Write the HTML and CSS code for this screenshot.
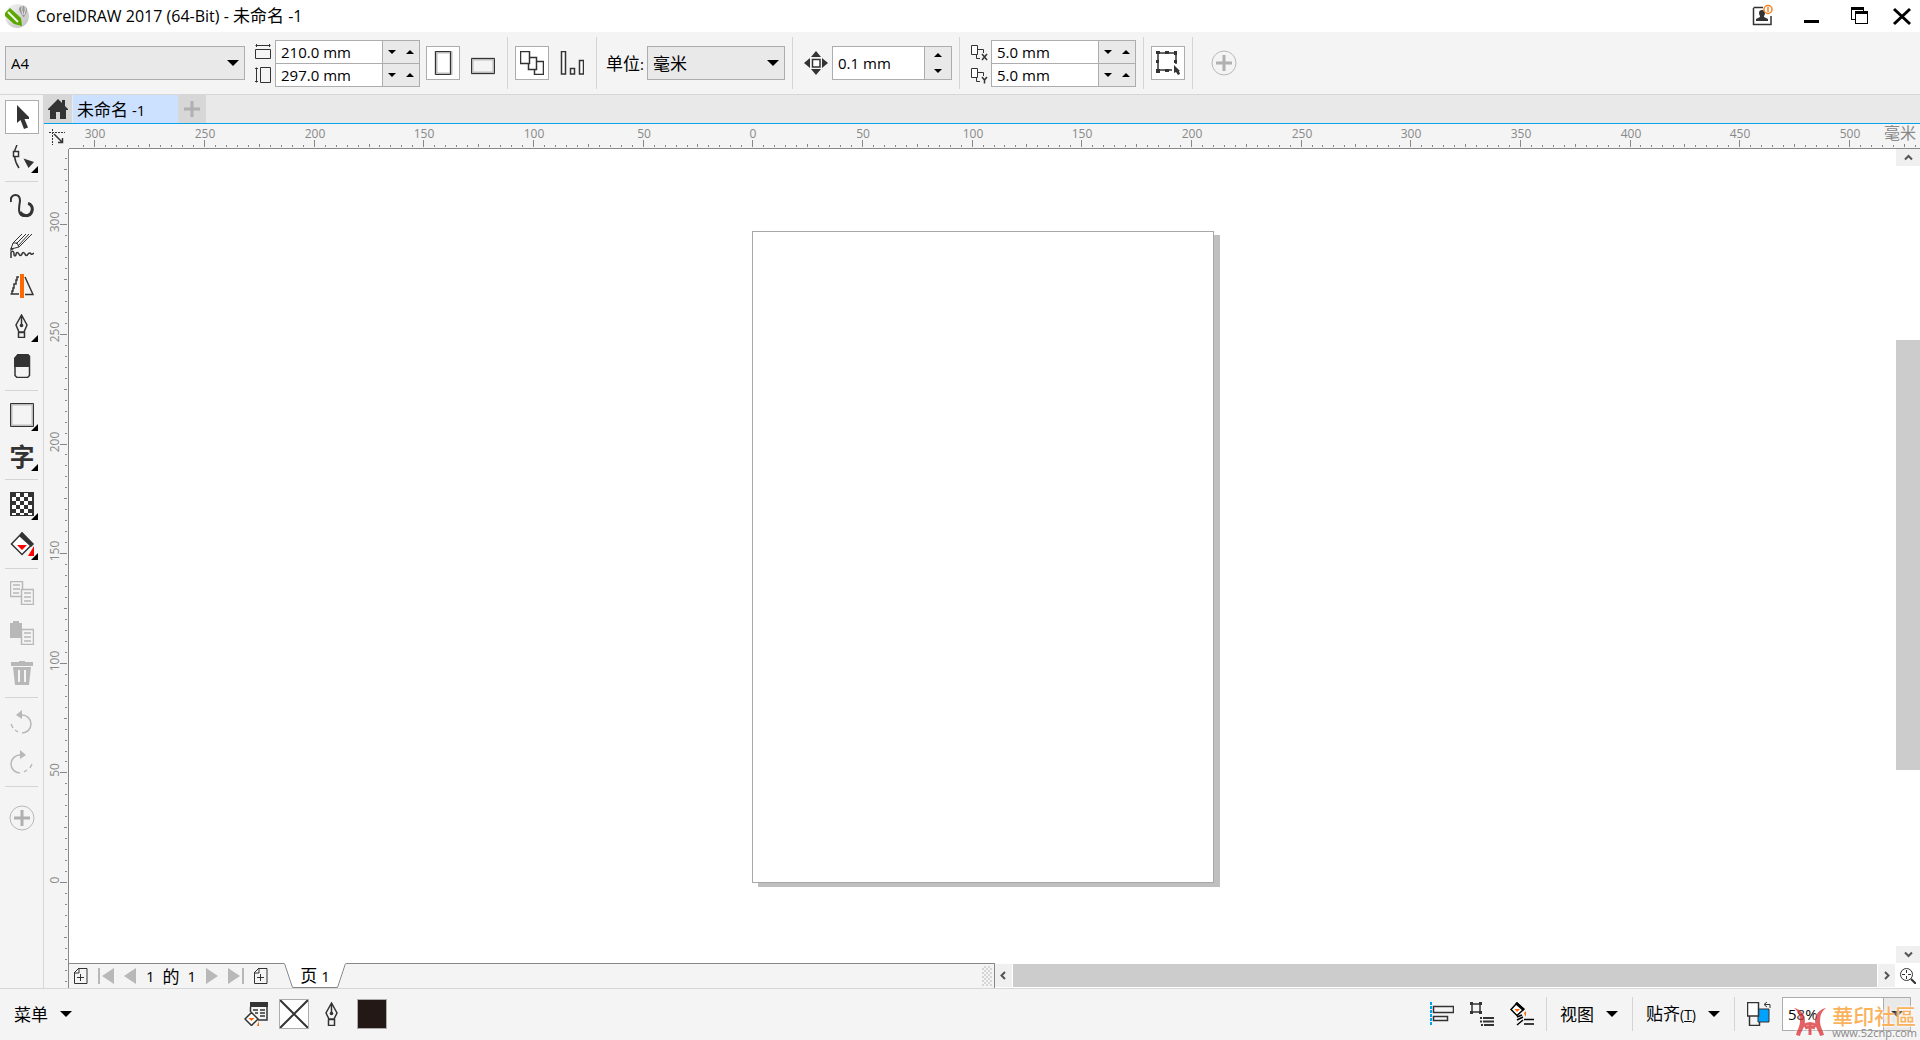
FILE: index.html
```html
<!DOCTYPE html>
<html lang="zh-CN">

<head>
    <meta charset="UTF-8">
    <meta name="viewport" content="width=device-width, initial-scale=1.0">
    <title>CorelDRAW 2017 (64-Bit) - 未命名 -1</title>
    <link rel="stylesheet" href="styles.css">
</head>

<body>
    <header class="title-bar">
        <svg class="logo" viewBox="0 0 24 24">
            <defs>
                <linearGradient id="ball" x1="0" y1="0" x2="1" y2="1">
                    <stop offset="0" stop-color="#f8f8f8" />
                    <stop offset="1" stop-color="#bdbdbd" />
                </linearGradient>
            </defs>
            <circle cx="12" cy="12" r="12" fill="url(#ball)" />
            <path d="M0 9L5 4L16 14L17 22L9 20L0 12z" fill="#5aa700" />
            <path d="M3 8L13 18" stroke="#f3f8ea" stroke-width="2" />
            <path d="M14 5C14 1 22 0 22 6C22 9 20 11 19 13H18C17 10 14 8 14 5z" fill="#999" />
            <path d="M17 2Q16 6 18 11M20 2Q21 6 19 11" stroke="#e8e8e8" fill="none" />
        </svg>
        <h1>CorelDRAW 2017 (64-Bit) - <span class="zh">未命名</span> -1</h1>
        <button class="win-btn" aria-label="账户"><svg viewBox="0 0 24 24">
                <path d="M3.500 4v16.500h17.500V12M3.500 3.500H13" fill="none" stroke="#333" stroke-width="1.500" />
                <path d="M9 9a3 3 0 0 1 6 0c0 2-1 2-1 4l4 2v2H6v-2l4-2c0-2-1-2-1-4z" fill="#333" />
                <circle cx="18" cy="5.500" r="4" fill="#fff" stroke="#f58220" stroke-width="1.500" />
                <path d="M18 3v5" stroke="#f58220" stroke-width="1.500" />
            </svg></button>
        <button class="win-btn" aria-label="最小化"><svg viewBox="0 0 24 24">
                <path d="M5 16h15v3H5z" />
            </svg></button>
        <button class="win-btn" aria-label="还原"><svg viewBox="0 0 24 24" shape-rendering="crispEdges">
                <path d="M3 3h13v4h4v13H7v-4H3zM4 6v9h3V7h8V6zM8 10v9h11v-9z" fill-rule="evenodd" />
            </svg></button>
        <button class="win-btn close" aria-label="关闭"><svg viewBox="0 0 24 24">
                <path d="M4 5L20 20M20 5L4 20" stroke="#000" stroke-width="3" />
            </svg></button>
    </header>

    <div class="property-bar">
        <div class="select page-size">
            <select aria-label="页面大小">
                <option>A4</option>
            </select>
        </div>
        <div class="pair">
            <div class="field">
                <label for="page-w" title="宽度"><svg viewBox="0 0 16 20">
                        <path d="M.5 3.500h15M1.500 2v3M14.500 2v3M.5 7.500h15v9h-15z" class="line" />
                    </svg></label>
                <div class="spin"><input type="text" id="page-w" value="210.0 mm"><button
                        class="down" aria-label="减"></button><button class="up" aria-label="加"></button></div>
            </div>
            <div class="field">
                <label for="page-h" title="高度"><svg viewBox="0 0 16 20">
                        <path d="M1.500 2.500v15M0 3.500h3M0 16.500h3M5.500 2.500h10v15h-10z" class="line" />
                    </svg></label>
                <div class="spin"><input type="text" id="page-h" value="297.0 mm"><button
                        class="down" aria-label="减"></button><button class="up" aria-label="加"></button></div>
            </div>
        </div>
        <button class="tool active" aria-label="纵向"><svg viewBox="0 0 24 24">
                <path d="M5 1h15v22H5z" fill="#fff" stroke="#bbb" stroke-width="3" />
                <path d="M4.500 .5h15v23h-15z" class="line" />
            </svg></button>
        <button class="tool" aria-label="横向"><svg viewBox="0 0 24 24">
                <path d="M1 8h22v14H1z" fill="#f4f4f4" stroke="#bbb" stroke-width="3" />
                <path d="M.5 7.500h23v15H.5z" class="line" />
            </svg></button>
        <span class="sep"></span>
        <button class="tool active" aria-label="所有页面"><svg viewBox="0 0 24 24">
                <path d="M14.500 10.500h9v13h-9z" class="box bold" />
                <path d="M8.500 6.500h8v12h-8z" class="box bold" />
                <path d="M.5 .5h9v12h-9z" class="box bold" />
            </svg></button>
        <button class="tool" aria-label="当前页面"><svg viewBox="0 0 24 24">
                <path d="M1.500 .5h4v22.500h-4zM10.500 17.500h4v5.500h-4zM19.500 9.500h4V23h-4z" class="box bold" />
            </svg></button>
        <span class="sep"></span>
        <div class="units">
            <label for="unit"><span class="zh">单位</span>:</label>
            <div class="select">
                <select id="unit" class="zh">
                    <option>毫米</option>
                </select>
            </div>
        </div>
        <span class="sep"></span>
        <div class="field nudge">
            <label for="nudge" title="微调距离"><svg viewBox="0 0 24 24">
                    <path d="M12 0l5 6H7zM12 24l5-6H7zM0 12l6-5v10zM24 12l-6-5v10z" fill="#333" />
                    <path d="M8.500 8.500h7.500V16H8.500z" class="box bold" />
                </svg></label>
            <div class="spin tall"><input type="text" id="nudge" value="0.1 mm">
                <div class="stack"><button class="up" aria-label="加"></button><button class="down"
                        aria-label="减"></button></div>
            </div>
        </div>
        <span class="sep"></span>
        <div class="pair">
            <div class="field">
                <label for="dup-x" title="再制 X"><svg viewBox="0 0 18 20">
                        <path d="M.5 3.500h6v9h-6z" class="box" />
                        <path d="M7 7.500h5.500V11M5.500 13v3.500H9" class="line" />
                        <path d="M11 12l5 6M16 12l-5 6" class="line bold" />
                    </svg></label>
                <div class="spin"><input type="text" id="dup-x" value="5.0 mm"><button
                        class="down" aria-label="减"></button><button class="up" aria-label="加"></button></div>
            </div>
            <div class="field">
                <label for="dup-y" title="再制 Y"><svg viewBox="0 0 18 20">
                        <path d="M.5 3.500h6v9h-6z" class="box" />
                        <path d="M7 7.500h5.500V11M5.500 13v3.500H9" class="line" />
                        <path d="M11 12l2.500 3 2.500-3M13.500 15v3.500" class="line bold" />
                    </svg></label>
                <div class="spin"><input type="text" id="dup-y" value="5.0 mm"><button
                        class="down" aria-label="减"></button><button class="up" aria-label="加"></button></div>
            </div>
        </div>
        <span class="sep"></span>
        <button class="tool active" aria-label="视为已填充"><svg viewBox="0 0 24 24">
                <path d="M16 19H2V2h18v11" class="line bold" />
                <path d="M0 0h4v3H0zM9 0h4v3H9zM18 0h3v4h-3zM0 9h3v3H0zM0 18h4v4H0zM9 18h4v3H9zM18 9h3v3h-3z" fill="#333" />
                <path d="M18 14v8l2-1 2 3 2-1-1-3h1z" fill="#333" />
            </svg></button>
        <span class="sep"></span>
        <button class="add" aria-label="自定义"><svg viewBox="0 0 26 26">
                <circle cx="13" cy="13" r="12" fill="none" stroke="#b8b8b8" />
                <path d="M13 5v16M5 13h16" stroke="#b0b0b0" stroke-width="3" />
            </svg></button>
    </div>

    <main class="workspace">
        <nav class="toolbox">
            <button class="tool active" aria-label="选择"><svg viewBox="0 0 24 24">
                    <path d="M7 0v18l3.500-3 3.500 9 4-1.500-3.500-8.500h4.500v-2z" fill="#333" />
                </svg></button>
            <button class="tool flyout" aria-label="形状"><svg viewBox="0 0 24 24">
                    <path d="M7 0C3 7 4 16 9 23" class="line bold" />
                    <path d="M3.500 6.500h5v5h-5z" class="box bold" />
                    <path d="M13.500 13.500L24 17l-5.500 6z" fill="#333" />
                </svg></button>
            <hr>
            <button class="tool" aria-label="手绘"><svg viewBox="0 0 24 24">
                    <path d="M1 8C0 3 3 1 5.500 1C9 1 10 3 10 7C9 13 7 22 15 22C20 22 23 18 22 14" class="line" stroke-width="2" />
                    <path d="M10 18C12 22 20 24 22 17C23 13 21 10 18 9.500" class="line fat" />
                </svg></button>
            <button class="tool" aria-label="艺术笔"><svg viewBox="0 0 24 24">
                    <path d="M3 9L12 0M9 13L22 0M3 9L1 15L9 13L7 9zM6 10L16 0M8 12L19 0" class="line" />
                    <path d="M0 17L1 13L4 15z" fill="#333" />
                    <path d="M1 24V18q3-2 3 2v1q1 2 2 0v-1q1-3 3 0q1 3 3 0q1-3 3 0q1 3 3 0q2-2 3 0q1 1 3-1" class="line bold" />
                </svg></button>
            <button class="tool" aria-label="对称"><svg viewBox="0 0 24 24">
                    <path d="M9 3H7v3H6v4H4v4H3v3H2v3H0.500H9M15 3l8 17.500h-8" class="line bold" />
                    <path d="M10 0h4v24h-4z" fill="#ff6a00" />
                </svg></button>
            <button class="tool flyout" aria-label="钢笔"><svg viewBox="0 0 24 24">
                    <path d="M11.500 1L6 11l3 7h5l3-7zM11.500 1v10M8.500 18.500h6v5h-6z" class="line bold" />
                    <circle cx="11.500" cy="11.500" r="1.800" fill="#333" />
                </svg></button>
            <button class="tool" aria-label="橡皮擦"><svg viewBox="0 0 24 24">
                    <path d="M8 .5h9.500l2 2v19l-2 2H7l-2-2v-17z" fill="#f4f4f4" stroke="#333" stroke-width="1.500" />
                    <path d="M8 0h10l2 2v11H4V4z" fill="#333" />
                </svg></button>
            <hr>
            <button class="tool flyout" aria-label="矩形"><svg viewBox="0 0 24 24">
                    <path d="M1.500 1.500h21v21h-21z" fill="none" stroke="#bbb" stroke-width="2" />
                    <path d="M.5 .5h23v23H.5z" class="line" />
                </svg></button>
            <button class="tool flyout glyph">字</button>
            <hr>
            <button class="tool flyout" aria-label="透明度"><svg viewBox="0 0 24 24" shape-rendering="crispEdges">
                    <path d="M0 0h24v24H0z" fill="#333" />
                    <path d="M6 1h4v4H6zM14 1h4v4h-4zM2 5h4v4H2zM10 5h4v4h-4zM18 5h4v4h-4zM6 9h4v4H6zM14 9h4v4h-4zM2 13h4v4H2zM10 13h4v4h-4zM18 13h4v4h-4zM6 17h4v4H6zM14 17h4v4h-4zM2 21h4v2H2zM10 21h4v2h-4zM18 21h4v2h-4z" fill="#fff" />
                </svg></button>
            <button class="tool flyout" aria-label="填充"><svg viewBox="0 0 24 24">
                    <path d="M12 1L1.500 12L12 22.500L22.500 12z" fill="#fff" stroke="#333" stroke-width="1.500" />
                    <path d="M12 0l12 12-3 3L9 4z" fill="#333" />
                    <path d="M7 13h10l-5 5zM24 14v10h-6z" fill="#f00" />
                </svg></button>
            <hr>
            <button class="tool muted" aria-label="复制"><svg viewBox="0 0 24 24">
                    <path d="M.5 .5h12v15H.5zM3 4h7M3 8h7M3 12h6" class="line bold" />
                    <path d="M11.500 8.500h12v15h-12zM14 12h7M14 16h7M14 20h7" class="box bold" />
                </svg></button>
            <button class="tool muted" aria-label="粘贴"><svg viewBox="0 0 24 24">
                    <path d="M0 2h3V0h6v2h3v15H0z" fill="#b8b8b8" />
                    <path d="M11.500 8.500h12v15h-12zM14 12h7M14 16h7M14 20h7" class="box bold" />
                </svg></button>
            <button class="tool muted" aria-label="删除"><svg viewBox="0 0 24 24">
                    <path d="M9 0h6v1h8v4H1V1h8zM3 6h18l-2 18H5zM8 9v12h2V9zM14 9v12h2V9z" fill="#b8b8b8" fill-rule="evenodd" />
                </svg></button>
            <hr>
            <button class="tool muted" aria-label="撤销"><svg viewBox="0 0 24 24">
                    <path d="M12 5a9 9 0 1 1 0 18M8 22l-3-2M3 18l-2-4" class="line bold" />
                    <path d="M12 0v9L6 5z" fill="#b8b8b8" />
                </svg></button>
            <button class="tool muted" aria-label="重做"><svg viewBox="0 0 24 24">
                    <path d="M10 5a9 9 0 1 0 0 18M14 22l3-2M20 18l2-4" class="line bold" />
                    <path d="M10 0v9l6-4z" fill="#b8b8b8" />
                </svg></button>
            <hr>
            <button class="add" aria-label="自定义"><svg viewBox="0 0 26 26">
                    <circle cx="13" cy="13" r="12" fill="none" stroke="#b8b8b8" />
                    <path d="M13 5v16M5 13h16" stroke="#b0b0b0" stroke-width="3" />
                </svg></button>
        </nav>

        <section class="document">
            <div class="tabs">
                <button class="home" aria-label="欢迎屏幕"><svg viewBox="0 0 20 20">
                        <path d="M10 0L0 10v1h2v9h6v-7h4v7h6v-9h2v-1l-3-3V1h-3v3z" fill="#333" />
                    </svg></button>
                <button class="tab"><span class="zh">未命名</span> -1</button>
                <button class="new-tab" aria-label="新建"><svg viewBox="0 0 18 18">
                        <path d="M9 1v16M1 9h16" stroke="#b0b0b0" stroke-width="3" />
                    </svg></button>
            </div>

            <div class="stage">
                <div class="corner"><svg viewBox="0 0 25 25">
                        <path d="M5 8.500h16M8.500 5v16" class="line" stroke-dasharray="2 1" />
                        <path d="M10 10l8 8M18.500 14v4.500H14" class="line bold" />
                    </svg></div>
                <div class="ruler-x"><svg id="ruler-x"></svg><span class="unit">毫米</span></div>
                <div class="ruler-y"><svg id="ruler-y"></svg></div>
                <div class="canvas">
                    <div class="page" id="page"></div>
                </div>
                <div class="scroll-y">
                    <button aria-label="向上"><svg viewBox="0 0 9 9">
                            <path d="M1 6.500L4.500 3L8 6.500" />
                        </svg></button>
                    <div class="track">
                        <div class="thumb"></div>
                    </div>
                    <button aria-label="向下"><svg viewBox="0 0 9 9">
                            <path d="M1 2.500L4.500 6L8 2.500" />
                        </svg></button>
                </div>
                <div class="bottom">
                    <div class="pager">
                        <button aria-label="添加页"><svg width="14" viewBox="0 0 14 16">
                                <path d="M4.500 .5h8.500v15H.5V4.500z" class="line" />
                                <path d="M0 5l5-5v5zM6.500 6v7M3 9.500h7" class="line" />
                            </svg></button>
                        <button aria-label="第一页"><svg width="16" viewBox="0 0 16 16">
                                <path d="M0 0h2v16H0zM16 0v16L4 8z" fill="#b8b8b8" />
                            </svg></button>
                        <button aria-label="上一页"><svg width="12" viewBox="0 0 12 16">
                                <path d="M12 0v16L0 8z" fill="#b8b8b8" />
                            </svg></button>
                        <p>1<span class="zh">的</span>1</p>
                        <button aria-label="下一页"><svg width="12" viewBox="0 0 12 16">
                                <path d="M0 0v16l12-8z" fill="#b8b8b8" />
                            </svg></button>
                        <button aria-label="最后一页"><svg width="16" viewBox="0 0 16 16">
                                <path d="M14 0h2v16h-2zM0 0v16l12-8z" fill="#b8b8b8" />
                            </svg></button>
                        <button aria-label="添加页"><svg width="14" viewBox="0 0 14 16">
                                <path d="M4.500 .5h8.500v15H.5V4.500z" class="line" />
                                <path d="M0 5l5-5v5zM6.500 6v7M3 9.500h7" class="line" />
                            </svg></button>
                        <button class="page-tab"><svg viewBox="0 0 62 25">
                                <path d="M0 0h62v1l-8 23.500H8.500L0 1z" fill="#fff" />
                                <path d="M.5 .5L8.500 24.500H53.500L61.500 .5" fill="none" stroke="#888" />
                            </svg><span class="page-name"><span class="zh">页</span> 1</span></button>
                        <span class="grip"></span>
                    </div>
                    <div class="scroll-x">
                        <button aria-label="向左"><svg viewBox="0 0 9 9">
                                <path d="M6 1L2.500 4.500L6 8" />
                            </svg></button>
                        <div class="thumb"></div>
                        <button aria-label="向右"><svg viewBox="0 0 9 9">
                                <path d="M3 1L6.500 4.500L3 8" />
                            </svg></button>
                    </div>
                    <button class="zoom" aria-label="导航器"><svg viewBox="0 0 16 16">
                            <circle cx="6.500" cy="6.500" r="6" class="line" />
                            <path d="M11 11l5 5" class="line" stroke-width="2" />
                            <path d="M6.500 2v3M6.500 8v3M2 6.500h3M8 6.500h3" class="line" />
                        </svg></button>
                </div>
            </div>
        </section>
    </main>

    <footer class="status-bar">
        <button class="menu main-menu"><span class="zh">菜单</span></button>
        <button class="tool" aria-label="文档调色板"><svg viewBox="0 0 24 24">
                <path d="M6 0h18v5H6z" fill="#333" />
                <path d="M6.500 5v5M23 5v13H14M9 8h5M16 8h5M11 11h3M16 11h5M16 14h5" class="line bold" />
                <path d="M7.500 10.500L1 17l6.500 6.500L14 17z" class="box bold" />
                <path d="M4.500 16h6l-3 3zM15 19v5h-2z" fill="#f60" />
            </svg></button>
        <button class="swatch" aria-label="无填充"><svg viewBox="0 0 28 28">
                <path d="M0 0l28 28M28 0L0 28" class="line" />
            </svg></button>
        <button class="tool pen" aria-label="轮廓笔"><svg viewBox="0 0 24 24">
                <path d="M11.500 1L6 11l3 6h5l3-6zM11.500 1v10M8.500 17.500h6v6h-6z" class="line bold" />
                <circle cx="11.500" cy="11.500" r="1.800" fill="#333" />
            </svg></button>
        <button class="swatch black" aria-label="轮廓色"></button>

        <div class="status-right">
            <button class="tool" aria-label="对齐"><svg viewBox="0 0 24 24">
                    <path d="M1 0v24" stroke="#00a2e8" stroke-width="2" stroke-dasharray="3 1" />
                    <path d="M3.500 4.500h20v6h-20zM3.500 14.500h14v4h-14z" class="line bold" />
                </svg></button>
            <button class="tool" aria-label="对象属性"><svg viewBox="0 0 24 24">
                    <path d="M2 2h8v8H2z" class="line bold" />
                    <path d="M0 0h3v3H0zM9 0h3v3H9zM0 9h3v3H0zM9 9h3v3H9z" fill="#333" />
                    <path d="M10 16h2M13 16h11M10 19.500h2M13 19.500h11M11 23h2M14 23h10" class="line" stroke-width="2" />
                </svg></button>
            <button class="tool" aria-label="填充属性"><svg viewBox="0 0 24 24">
                    <path d="M7 1L1 7.500L7 13.500L13.500 7.500z" fill="#fff" stroke="#000" stroke-width="1.500" />
                    <path d="M7 0l8 7-2 2-8-7z" />
                    <path d="M4.500 7h5.500L7 10zM16 9v6l-2-4z" fill="#f60" />
                    <path d="M7 15l5-2M7 18l6-3M7 23l6-5M14 17.500h10M14 22h10" stroke="#000" stroke-width="1.500" />
                </svg></button>
            <span class="sep"></span>
            <button class="menu"><span class="zh">视图</span></button>
            <span class="sep"></span>
            <button class="menu"><span><span class="zh">贴齐</span><small>(<u>T</u>)</small></span></button>
            <span class="sep"></span>
            <button class="tool" aria-label="页面顺序"><svg viewBox="0 0 24 24">
                    <path d="M2.500 13v10.500h10V20" class="line bold" />
                    <path d="M11 7h11v13H11z" fill="#00a2ff" stroke="#333" />
                    <path d="M.5 .5h11V14H.5z" class="box bold" />
                    <path d="M18 2.500h5V6M20 0l-3 2.500 3 2.500" class="line" />
                </svg></button>
            <div class="select zoom-level">
                <select aria-label="缩放级别">
                    <option>58%</option>
                </select>
            </div>
        </div>

        <div class="watermark">
            <svg viewBox="0 0 32 29">
                <path d="M0 0C6 1 11 6 11 13C11 20 7 23 6 28L2 27C3 22 6 19 6 13C6 7 4 3 0 0zM32 0C26 1 21 6 21 13C21 20 25 23 26 28L30 27C29 22 26 19 26 13C26 7 28 3 32 0z" fill="#dc3b3f" />
                <path d="M9 18Q16 13 23 18M16 16v11M11 20q5-2 10 0" fill="none" stroke="#dc3b3f" stroke-width="3" />
            </svg>
            <div>
                <b>華印社區</b>
                <i>www.52cnp.com</i>
            </div>
        </div>
    </footer>
    <script src="script.js"></script>
</body>

</html>
```
FILE: styles.css
```css
* {
    margin: 0;
    padding: 0;
    box-sizing: border-box;
}

body {
    height: 100vh;
    display: flex;
    flex-direction: column;
    overflow: hidden;
    background-color: #f4f4f4;
    color: #000;
    font-family: "Open Sans", "Noto Sans CJK SC", sans-serif;
    font-size: 15px;
    line-height: 20px;
}

button,
input,
select {
    font: inherit;
    color: inherit;
    border: none;
    border-radius: 0;
    background: none;
    outline: none;
}

svg {
    display: block;
}

.zh {
    font-family: "Noto Sans CJK SC", sans-serif;
    font-size: 17px;
}

.line {
    fill: none;
    stroke: #333;
}

.box {
    fill: #fff;
    stroke: #333;
}

.bold {
    stroke-width: 1.5;
}

.fat {
    stroke-width: 3;
}

/* title bar */
.title-bar {
    height: 32px;
    display: flex;
    align-items: center;
    padding: 0 6px 0 5px;
    background-color: #fff;
}

.logo {
    width: 24px;
    height: 24px;
}

.title-bar h1 {
    flex: 1;
    padding: 0 0 2px 7px;
    font-size: 16px;
    font-weight: normal;
}

.win-btn {
    width: 24px;
    height: 24px;
    margin-left: 25px;
}

.win-btn.close {
    margin-left: 18px;
}

/* property bar */
.property-bar {
    height: 63px;
    display: flex;
    align-items: center;
    gap: 6px;
    padding: 0 5px;
    border-bottom: 1px solid #d7d7d7;
}

.sep {
    width: 1px;
    height: 52px;
    margin: 0 1px;
    background-color: #d4d4d4;
}

.select {
    display: grid;
    align-items: center;
    height: 34px;
    border: 1px solid #adadad;
    background-color: #e9e9e9;
}

.select select {
    grid-area: 1 / 1;
    height: 32px;
    padding-left: 5px;
    appearance: none;
}

.select::after,
.menu::after {
    content: "";
    border: 6px solid transparent;
    border-top-color: #000;
    border-bottom: none;
}

.select::after {
    grid-area: 1 / 1;
    justify-self: end;
    margin-right: 5px;
    pointer-events: none;
}

.page-size {
    width: 240px;
}

.units {
    display: flex;
    align-items: center;
    padding-left: 2px;
}

.units label {
    width: 41px;
}

.units .select {
    width: 138px;
}

.field {
    display: flex;
    align-items: center;
}

.field label {
    width: 24px;
    padding-left: 4px;
}

.field label svg {
    height: 20px;
}

.nudge label {
    width: 32px;
}

.nudge label svg {
    width: 24px;
    height: 24px;
}

.field + .field {
    margin-top: -1px;
}

.spin {
    display: flex;
    width: 145px;
    height: 24px;
    border: 1px solid #adadad;
    background-color: #e9e9e9;
}

.spin input {
    flex: 1;
    min-width: 0;
    padding-left: 5px;
    background-color: #fff;
    border-right: 1px solid #adadad;
}

.spin.tall {
    width: 120px;
    height: 34px;
}

.stack {
    display: flex;
    flex-direction: column;
    width: 26px;
}

.up,
.down {
    flex: 0 0 18px;
    display: grid;
    place-items: center;
}

.stack button {
    flex: 1;
}

.up::after,
.down::after {
    content: "";
    border: 4px solid transparent;
}

.up::after {
    border-top: none;
    border-bottom-color: #000;
}

.down::after {
    border-bottom: none;
    border-top-color: #000;
}

.tool {
    width: 34px;
    height: 34px;
    display: grid;
    place-items: center;
    border: 1px solid transparent;
}

.tool svg {
    width: 24px;
    height: 24px;
}

.tool.active {
    border-color: #adadad;
    background-color: #fff;
}

.add {
    width: 48px;
    height: 34px;
    display: grid;
    place-items: center;
}

.add svg {
    width: 26px;
    height: 26px;
}

/* toolbox */
.workspace {
    flex: 1;
    min-height: 0;
    display: flex;
}

.toolbox {
    width: 44px;
    display: flex;
    flex-direction: column;
    gap: 6px;
    padding: 5px;
    border-right: 1px solid #d7d7d7;
}

.toolbox hr {
    height: 1px;
    margin: 1px 0;
    border: none;
    background-color: #d4d4d4;
}

.toolbox .add {
    width: 34px;
    margin-top: 7px;
}

.flyout {
    position: relative;
}

.flyout::after {
    content: "";
    position: absolute;
    right: 0;
    bottom: 0;
    border-left: 7px solid transparent;
    border-bottom: 7px solid #000;
}

.glyph {
    font-family: "Noto Sans CJK SC", sans-serif;
    font-size: 25px;
    font-weight: bold;
    color: #333;
}

.muted .line,
.muted .box {
    stroke: #b8b8b8;
}

.muted .box {
    fill: #f4f4f4;
}

/* document */
.document {
    flex: 1;
    min-width: 0;
    display: flex;
    flex-direction: column;
}

.tabs {
    height: 29px;
    display: flex;
    background-color: #e9e9e9;
    border-bottom: 1px solid #0ba2e8;
}

.home,
.new-tab {
    width: 28px;
    display: grid;
    place-items: center;
    background-color: #d7d7d7;
}

.home svg {
    width: 20px;
    height: 20px;
}

.new-tab svg {
    width: 18px;
    height: 18px;
}

.tab {
    width: 105px;
    margin-left: 1px;
    padding-left: 4px;
    text-align: left;
    background-color: #cce1ff;
}

.stage {
    flex: 1;
    min-height: 0;
    display: grid;
    grid-template-columns: 25px 1fr 24px;
    grid-template-rows: 25px 1fr 25px;
}

.corner svg {
    width: 25px;
    height: 25px;
}

.ruler-x {
    grid-column: 2 / 4;
    position: relative;
    overflow: hidden;
    border-bottom: 1px solid #888;
}

.ruler-y {
    grid-row: 2 / 4;
    overflow: hidden;
    border-right: 1px solid #888;
}

.ruler-x svg,
.ruler-y svg {
    width: 100%;
    height: 100%;
}

.tick {
    stroke: #888;
    shape-rendering: crispEdges;
}

.tick-label {
    fill: #888;
    font-size: 12px;
    text-anchor: middle;
}

.unit {
    position: absolute;
    right: 4px;
    top: 0;
    color: #888;
    font-size: 16px;
    line-height: 18px;
}

.canvas {
    display: flex;
    justify-content: center;
    align-items: center;
    overflow: hidden;
    padding-top: 2px;
    background-color: #fff;
}

.page {
    flex: none;
    width: 462px;
    height: 652px;
    border: 1px solid #a8a8a8;
    background-color: #fff;
    box-shadow: 6px 4px 0 #bfbfbf;
}

.scroll-y {
    display: flex;
    flex-direction: column;
    background-color: #fff;
}

.scroll-y button,
.scroll-x button {
    flex: 0 0 17px;
    display: grid;
    place-items: center;
    background-color: #f0f0f0;
}

.scroll-y svg,
.scroll-x svg {
    width: 9px;
    height: 9px;
    fill: none;
    stroke: #555;
    stroke-width: 2;
}

.track {
    flex: 1;
    padding-top: 174px;
}

.track .thumb {
    height: 71%;
}

.thumb {
    background-color: #ccc;
}

/* bottom row */
.bottom {
    grid-column: 2 / 4;
    display: flex;
    background-color: #fff;
}

.pager {
    flex: 0 0 50%;
    display: flex;
    align-items: center;
    gap: 10px;
    padding-left: 5px;
    background-color: #f4f4f4;
    border-top: 1px solid #888;
    border-right: 1px solid #888;
}

.pager svg {
    height: 16px;
}

.pager p {
    display: flex;
    justify-content: space-between;
    width: 50px;
}

.page-tab {
    display: grid;
    place-items: center;
    width: 62px;
    height: 25px;
    margin: -1px 0 0 6px;
}

.page-tab svg {
    grid-area: 1 / 1;
    width: 62px;
    height: 25px;
}

.page-name {
    grid-area: 1 / 1;
}

.grip {
    width: 10px;
    height: 20px;
    margin: 0 2px 0 auto;
    background-image: linear-gradient(#b8b8b8, #b8b8b8), linear-gradient(#b8b8b8, #b8b8b8);
    background-image: conic-gradient(#b8b8b8 25%, transparent 0 50%, #b8b8b8 0 75%, transparent 0);
    background-size: 4px 4px;
    opacity: 0.5;
}

.scroll-x {
    flex: 1;
    display: flex;
    gap: 1px;
    padding: 1px 1px 1px 0;
}

.scroll-x .thumb {
    flex: 1;
}

.zoom {
    width: 24px;
    display: grid;
    place-items: center;
}

.zoom svg {
    width: 16px;
    height: 16px;
}

/* status bar */
.status-bar {
    position: relative;
    height: 52px;
    display: flex;
    align-items: center;
    padding: 0 9px 2px 14px;
    border-top: 1px solid #d7d7d7;
}

.menu {
    display: flex;
    align-items: center;
    gap: 12px;
    height: 34px;
}

.menu small {
    font-size: 14px;
}

.main-menu {
    width: 225px;
}

.swatch {
    width: 30px;
    height: 30px;
    margin-left: 6px;
    border: 1px solid #adadad;
    background-color: #fff;
}

.swatch .line {
    stroke-width: 2;
}

.swatch.black {
    margin-left: 8px;
    background-color: #231815;
}

.pen {
    margin-left: 6px;
}

.status-right {
    display: flex;
    align-items: center;
    gap: 6px;
    margin-left: auto;
}

.status-right .sep {
    height: 34px;
}

.status-right .menu {
    padding: 0 7px 0 6px;
}

.zoom-level {
    width: 129px;
    background: linear-gradient(to left, #e9e9e9 26px, #adadad 26px, #adadad 27px, #fff 27px);
}

.zoom-level::after {
    margin-right: 7px;
}

.watermark {
    position: absolute;
    right: 3px;
    bottom: 0;
    display: flex;
    align-items: center;
    gap: 6px;
    pointer-events: none;
}

.watermark svg {
    width: 32px;
    height: 29px;
    opacity: 0.8;
    filter: drop-shadow(0 0 2px #fff);
}

.watermark b {
    display: block;
    font-family: "Noto Sans CJK TC", sans-serif;
    font-size: 21px;
    font-weight: 500;
    line-height: 22px;
    color: #fbb25c;
    text-shadow: 0 0 3px #fff, 0 0 3px #fff;
}

.watermark i {
    display: block;
    font-style: normal;
    font-size: 11px;
    line-height: 14px;
    text-align: right;
    color: #888;
}
```
FILE: script.js
```javascript
const SVG_NS = "http://www.w3.org/2000/svg";
const pxPerMm = 2.193;
const rulerX = document.getElementById("ruler-x");
const rulerY = document.getElementById("ruler-y");
const page = document.getElementById("page");

function add(parent, name, attrs, text) {
    const el = document.createElementNS(SVG_NS, name);
    for (const key in attrs) {
        el.setAttribute(key, attrs[key]);
    }
    if (text !== undefined) {
        el.textContent = text;
    }
    parent.appendChild(el);
}

function tickLength(mm) {
    if (mm % 50 === 0) return 7;
    if (mm % 25 === 0) return 3;
    return 2;
}

function drawRulers() {
    const box = page.getBoundingClientRect();
    const rx = rulerX.getBoundingClientRect();
    const ry = rulerY.getBoundingClientRect();
    // zero point is the bottom left corner of the page
    const zeroX = Math.ceil(box.left) - rx.left + 0.8;
    const zeroY = Math.floor(box.bottom) - 1 - ry.top + 0.6;
    rulerX.innerHTML = "";
    rulerY.innerHTML = "";

    for (let mm = -1000; mm <= 1000; mm += 5) {
        const x = Math.floor(zeroX + mm * pxPerMm);
        if (x > 3 && x < rx.width) {
            add(rulerX, "path", { class: "tick", d: `M${x + 0.5} ${23 - tickLength(mm)}V23` });
            if (mm % 50 === 0) {
                add(rulerX, "text", { class: "tick-label", x: x + 1, y: 14 }, Math.abs(mm));
            }
        }

        const y = Math.floor(zeroY - mm * pxPerMm);
        if (y > 3 && y < ry.height) {
            add(rulerY, "path", { class: "tick", d: `M${23 - tickLength(mm)} ${y + 0.5}H23` });
            if (mm % 50 === 0) {
                add(rulerY, "text", { class: "tick-label", transform: `translate(15 ${y - 2}) rotate(-90)` }, Math.abs(mm));
            }
        }
    }
}

drawRulers();
window.addEventListener("resize", drawRulers);
```
